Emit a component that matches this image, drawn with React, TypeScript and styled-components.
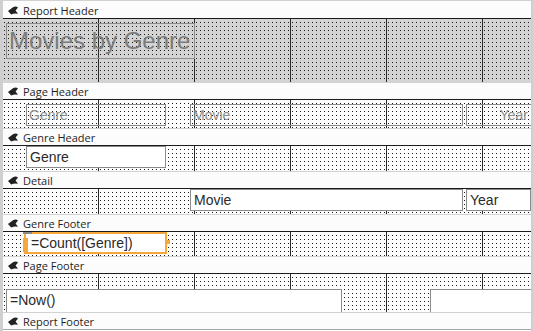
import React, { FC } from "react";
import styled, { createGlobalStyle } from "styled-components";

type Kind = "label" | "textbox" | "selected" | "title";

interface Control {
  kind: Kind;
  x: number;
  y: number;
  w: number;
  h: number;
  text?: string;
  align?: "left" | "right";
}

interface Section {
  title: string;
  height: number;
  shaded?: boolean;
  first?: boolean;
  controls: Control[];
}

const sections: Section[] = [
  {
    title: "Report Header",
    height: 63,
    shaded: true,
    first: true,
    controls: [{ kind: "title", x: 3, y: 4, w: 189, h: 36, text: "Movies by Genre" }],
  },
  {
    title: "Page Header",
    height: 28,
    controls: [
      { kind: "label", x: 23, y: 4, w: 140, h: 22, text: "Genre" },
      { kind: "label", x: 187, y: 4, w: 273, h: 22, text: "Movie" },
      { kind: "label", x: 463, y: 4, w: 66, h: 22, text: "Year", align: "right" },
    ],
  },
  {
    title: "Genre Header",
    height: 25,
    controls: [{ kind: "textbox", x: 23, y: 0, w: 140, h: 22, text: "Genre" }],
  },
  {
    title: "Detail",
    height: 25,
    controls: [
      { kind: "textbox", x: 187, y: 0, w: 273, h: 22, text: "Movie" },
      { kind: "textbox", x: 463, y: 0, w: 65, h: 22, text: "Year" },
    ],
  },
  {
    title: "Genre Footer",
    height: 24,
    controls: [{ kind: "selected", x: 21, y: 0, w: 143, h: 22, text: "=Count([Genre])" }],
  },
  {
    title: "Page Footer",
    height: 38,
    controls: [
      { kind: "textbox", x: 3, y: 15, w: 336, h: 26, text: "=Now()" },
      { kind: "textbox", x: 427, y: 15, w: 106, h: 26 },
    ],
  },
];

const GlobalStyle = createGlobalStyle`
  html, body {
    margin: 0;
    padding: 0;
    background: #fff;
  }
  body {
    font-family: "Liberation Sans", Arial, sans-serif;
  }
`;

const SectionIcon: FC = () => (
  <svg width="10" height="9" viewBox="0 0 10 9">
    <path d="M0 5 L5 1.2 Q8 -0.6 10 1.6 L7.6 4.4 L10 7.8 Q6.4 6.8 3.2 8.6 Z" fill="#222" />
  </svg>
);

const ControlBox: FC<{ c: Control }> = ({ c }) => {
  const pos = { left: c.x, top: c.y, width: c.w, height: c.h };
  if (c.kind === "title") {
    return <TitleLabel style={pos}>{c.text}</TitleLabel>;
  }
  if (c.kind === "label") {
    return (
      <Label style={pos} $align={c.align}>
        {c.text}
      </Label>
    );
  }
  if (c.kind === "selected") {
    return (
      <Selected style={pos}>
        {c.text}
        <MoveHandle />
        <SideHandle />
        <RightHandle />
      </Selected>
    );
  }
  return <TextBox style={pos}>{c.text}</TextBox>;
};

const App: FC = () => (
  <>
    <GlobalStyle />
    <Designer>
      {sections.map((s) => (
        <React.Fragment key={s.title}>
          <Bar $first={s.first}>
            <SectionIcon />
            <BarTitle>{s.title}</BarTitle>
          </Bar>
          <Area $height={s.height} $shaded={s.shaded}>
            {s.controls.map((c, i) => (
              <ControlBox key={i} c={c} />
            ))}
          </Area>
        </React.Fragment>
      ))}
      <Bar>
        <SectionIcon />
        <BarTitle>Report Footer</BarTitle>
      </Bar>
      <BottomEdge />
    </Designer>
  </>
);

const Designer = styled.div`
  width: 533px;
  height: 331px;
  box-sizing: border-box;
  border-left: 3px solid #cfcfcf;
  border-right: 2px solid #cfcfcf;
  display: flex;
  flex-direction: column;
  overflow: hidden;
  background: #fff;
`;

const Bar = styled.div<{ $first?: boolean }>`
  flex: none;
  box-sizing: border-box;
  height: ${(p) => (p.$first ? 18 : 17)}px;
  border-top: 1px solid #d2d2d2;
  background: #fcfcfc;
  display: flex;
  align-items: center;
  gap: 5px;
  padding: ${(p) => (p.$first ? 2 : 0)}px 0 0 5px;
`;

const BarTitle = styled.span`
  font-family: "Open Sans", "Liberation Sans", sans-serif;
  font-size: 11px;
  color: #1f1f1f;
  line-height: 1;
`;

const Area = styled.div<{ $height: number; $shaded?: boolean }>`
  position: relative;
  flex: none;
  height: ${(p) => p.$height}px;
  border-top: 1px solid #1a1a1a;
  overflow: hidden;
  background-color: ${(p) => (p.$shaded ? "#d4d4d4" : "#fdfdfd")};
  background-image:
    linear-gradient(to right, transparent 95px, #2a2a2a 95px, #2a2a2a 96px, transparent 96px),
    conic-gradient(from 270deg at 1px 1px, #1a1a1a 90deg, transparent 0);
  background-size: 96px 100%, 4px 4px;
  background-position: 0 0, 1px 3px;
`;

const Control = styled.div`
  position: absolute;
  box-sizing: border-box;
  border: 1px solid #8a8a8a;
  font-size: 14px;
  line-height: 20px;
  padding: 0 3px;
  white-space: nowrap;
  overflow: hidden;
`;

const TitleLabel = styled(Control)`
  font-size: 24px;
  line-height: 34px;
  color: #7c7c7c;
  padding: 0 2px;
  border-color: #8c8c8c;
`;

const Label = styled(Control)<{ $align?: "left" | "right" }>`
  color: #8c8c8c;
  text-align: ${(p) => p.$align ?? "left"};
  padding: 0 ${(p) => (p.$align === "right" ? 3 : 2)}px 0 2px;
`;

const TextBox = styled(Control)`
  background: #fff;
  color: #2a2a2a;
`;

const Selected = styled(TextBox)`
  overflow: visible;
  border: 2px solid #f6a83b;
  line-height: 18px;
  padding-left: 5px;
`;

const MoveHandle = styled.span`
  position: absolute;
  left: -3px;
  top: -2px;
  width: 9px;
  height: 2px;
  background: #8a8a8a;
`;

const SideHandle = styled.span`
  position: absolute;
  left: -3px;
  top: 4px;
  width: 5px;
  height: 14px;
  background: #f6a83b;
`;

const RightHandle = styled.span`
  position: absolute;
  right: -5px;
  top: 6px;
  width: 4px;
  height: 4px;
  background: #f6a83b;
`;

const BottomEdge = styled.div`
  flex: none;
  box-sizing: border-box;
  height: 4px;
  border-top: 1px solid #a8a8a8;
  border-bottom: 1px solid #6a6a6a;
  background: #fff;
`;

export default App;
